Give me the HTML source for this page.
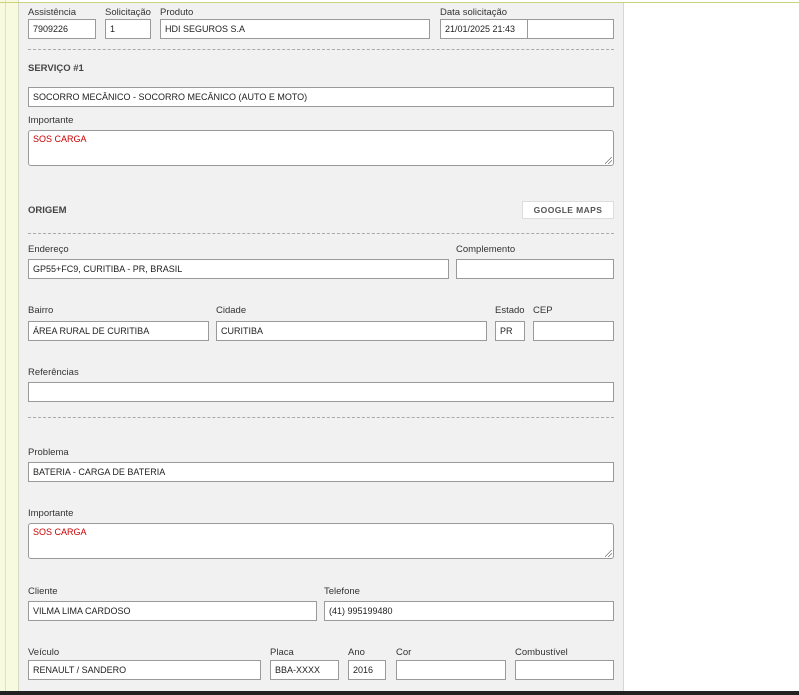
<!DOCTYPE html>
<html><head><meta charset="utf-8"><style>
body{margin:0;width:799px;height:695px;position:relative;background:#fff;font-family:"Liberation Sans",sans-serif;font-size:9px;color:#333;overflow:hidden}
.a{position:absolute}
.strip{left:0;top:0;width:18px;height:691px;background:#f7fadf;border-right:1px solid #d8d8c8}
.vl{left:5px;top:0;width:1px;height:691px;background:#dfe6a8}
.top{left:0;top:2px;width:799px;height:1px;background:#c9d47a}
.panel{left:19px;top:3px;width:604px;height:688px;background:#f1f1f1;border-right:1px solid #d6d6d6}
.i{position:absolute;background:#fff;border:1px solid #9a9a9a;box-sizing:border-box;height:20px;line-height:18px;padding-left:4px;font-size:9px;color:#222;white-space:nowrap;overflow:hidden}
.t{border-radius:3px;height:36px;color:#c00;line-height:16px}
.t::after{content:"";position:absolute;right:1px;bottom:1px;width:7px;height:7px;background:linear-gradient(135deg,transparent 45%,#777 45%,#777 52%,transparent 52%,transparent 70%,#777 70%,#777 77%,transparent 77%)}
.l{position:absolute;font-size:9.5px;color:#333}
.h{position:absolute;font-weight:bold;font-size:9.5px;color:#444}
.d{position:absolute;left:28px;width:586px;border-top:1px dashed #aaa;height:0}
.bar{left:0;top:691px;width:799px;height:4px;background:#222}
.btn{position:absolute;left:522px;top:201px;width:92px;height:18px;box-sizing:border-box;border:1px solid #ddd;background:#fff;font-weight:bold;font-size:8.5px;color:#555;text-align:center;line-height:17px;letter-spacing:.4px}
</style></head><body>
<div class="a strip"></div><div class="a vl"></div><div class="a top"></div>
<div class="a panel"></div>
<div class="l" style="left:28px;top:7px">Assistência</div>
<div class="l" style="left:105px;top:7px">Solicitação</div>
<div class="l" style="left:160px;top:7px">Produto</div>
<div class="l" style="left:440px;top:7px">Data solicitação</div>
<div class="i" style="left:28px;top:19px;width:68px">7909226</div>
<div class="i" style="left:105px;top:19px;width:46px">1</div>
<div class="i" style="left:160px;top:19px;width:270px">HDI SEGUROS S.A</div>
<div class="i" style="left:440px;top:19px;width:88px">21/01/2025 21:43</div>
<div class="i" style="left:527px;top:19px;width:87px"></div>
<div class="d" style="top:49px"></div>
<div class="h" style="left:28px;top:63px">SERVIÇO #1</div>
<div class="i" style="left:28px;top:87px;width:586px">SOCORRO MECÂNICO - SOCORRO MECÂNICO (AUTO E MOTO)</div>
<div class="l" style="left:28px;top:115px">Importante</div>
<div class="i t" style="left:28px;top:130px;width:586px">SOS CARGA</div>
<div class="h" style="left:28px;top:205px">ORIGEM</div>
<div class="btn">GOOGLE MAPS</div>
<div class="d" style="top:233px"></div>
<div class="l" style="left:28px;top:244px">Endereço</div>
<div class="l" style="left:456px;top:244px">Complemento</div>
<div class="i" style="left:28px;top:259px;width:421px">GP55+FC9, CURITIBA - PR, BRASIL</div>
<div class="i" style="left:456px;top:259px;width:158px"></div>
<div class="l" style="left:28px;top:305px">Bairro</div>
<div class="l" style="left:216px;top:305px">Cidade</div>
<div class="l" style="left:495px;top:305px">Estado</div>
<div class="l" style="left:533px;top:305px">CEP</div>
<div class="i" style="left:28px;top:321px;width:181px">ÁREA RURAL DE CURITIBA</div>
<div class="i" style="left:216px;top:321px;width:271px">CURITIBA</div>
<div class="i" style="left:495px;top:321px;width:30px">PR</div>
<div class="i" style="left:533px;top:321px;width:81px"></div>
<div class="l" style="left:28px;top:367px">Referências</div>
<div class="i" style="left:28px;top:382px;width:586px"></div>
<div class="d" style="top:417px"></div>
<div class="l" style="left:28px;top:447px">Problema</div>
<div class="i" style="left:28px;top:462px;width:586px">BATERIA - CARGA DE BATERIA</div>
<div class="l" style="left:28px;top:508px">Importante</div>
<div class="i t" style="left:28px;top:523px;width:586px">SOS CARGA</div>
<div class="l" style="left:28px;top:586px">Cliente</div>
<div class="l" style="left:324px;top:586px">Telefone</div>
<div class="i" style="left:28px;top:601px;width:289px">VILMA LIMA CARDOSO</div>
<div class="i" style="left:324px;top:601px;width:290px">(41) 995199480</div>
<div class="l" style="left:28px;top:647px">Veículo</div>
<div class="l" style="left:270px;top:647px">Placa</div>
<div class="l" style="left:348px;top:647px">Ano</div>
<div class="l" style="left:396px;top:647px">Cor</div>
<div class="l" style="left:515px;top:647px">Combustível</div>
<div class="i" style="left:28px;top:660px;width:233px">RENAULT / SANDERO</div>
<div class="i" style="left:270px;top:660px;width:69px">BBA-XXXX</div>
<div class="i" style="left:348px;top:660px;width:38px">2016</div>
<div class="i" style="left:396px;top:660px;width:110px"></div>
<div class="i" style="left:515px;top:660px;width:99px"></div>
<div class="a bar"></div>
</body></html>
